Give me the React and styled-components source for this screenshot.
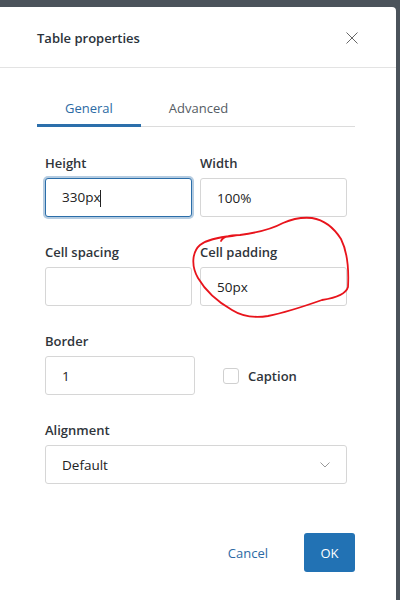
import React from "react";
import styled, { createGlobalStyle } from "styled-components";

const Global = createGlobalStyle`
  html, body { margin: 0; padding: 0; background: #4b535b; }
  body { font-family: "Open Sans", "Noto Sans", sans-serif; color: #222f3e; }
  * { box-sizing: border-box; }
`;

const Dialog = styled.div`
  position: relative;
  margin-top: 7px;
  width: 396px;
  height: 593px;
  background: #fff;
  border-top-right-radius: 4px;
  display: flex;
  flex-direction: column;
`;

const Header = styled.div`
  height: 61px;
  padding: 0 38px 0 37px;
  display: flex;
  align-items: center;
  justify-content: space-between;
  border-bottom: 1px solid #e3e3e3;
`;

const Title = styled.div`
  font-size: 13px;
  font-weight: 600;
  color: #2a323a;
  padding-top: 2px;
`;

const Close = styled.button`
  border: 0;
  background: none;
  padding: 0;
  width: 12px;
  height: 12px;
  display: flex;
  margin-top: 1px;
`;

const Body = styled.div`
  padding: 20px 41px 0 37px;
  display: flex;
  flex-direction: column;
`;

const Tabs = styled.div`
  display: flex;
  height: 39px;
  border-bottom: 1px solid #dcdcdc;
`;

const Tab = styled.div`
  padding: 0 28px;
  height: 39px;
  display: flex;
  align-items: center;
  font-size: 13px;
  color: ${(p) => (p.$active ? "#2c6aa4" : "#555c64")};
  border-bottom: 3px solid ${(p) => (p.$active ? "#2c6fab" : "transparent")};
  margin-bottom: -1px;
  padding-top: 4px;
`;

const Panel = styled.div`
  padding: 27px 8px 0 8px;
  display: flex;
  flex-direction: column;
  gap: 26px;
`;

const Grid = styled.div`
  display: grid;
  grid-template-columns: 1fr 1fr;
  column-gap: 8px;
  row-gap: 26px;
`;

const Field = styled.div`
  display: flex;
  flex-direction: column;
  width: ${(p) => p.$w || "auto"};
`;

const Label = styled.label`
  font-size: 13px;
  font-weight: 600;
  line-height: 18px;
  color: #2f353b;
  margin-bottom: 6px;
`;

const Input = styled.div`
  height: 39px;
  border: 1px solid ${(p) => (p.$focus ? "#2b6ea9" : "#d6d6d6")};
  border-radius: 3px;
  box-shadow: ${(p) => (p.$focus ? "0 0 0 2px rgba(43,110,169,0.35)" : "none")};
  padding: 0 16px;
  display: flex;
  align-items: center;
  font-size: 13.5px;
  color: #222;
  background: #fff;
  justify-content: space-between;
`;

const Caret = styled.span`
  display: inline-block;
  width: 1px;
  height: 17px;
  background: #222;
  vertical-align: middle;
`;

const Row = styled.div`
  display: flex;
  align-items: flex-end;
`;

const CheckWrap = styled.div`
  height: 39px;
  display: flex;
  align-items: center;
  margin-left: 28px;
  gap: 9px;
  font-size: 13px;
  font-weight: 600;
  color: #2f353b;
`;

const Box = styled.span`
  width: 16px;
  height: 16px;
  border: 1px solid #d0d0d0;
  border-radius: 3px;
  display: inline-block;
`;

const Footer = styled.div`
  margin-top: auto;
  padding: 0 41px 28px 0;
  display: flex;
  justify-content: flex-end;
  align-items: center;
  gap: 20px;
`;

const TextButton = styled.button`
  border: 0;
  background: none;
  font-family: inherit;
  font-size: 13px;
  color: #2c6aa4;
  padding: 0 16px;
  height: 39px;
`;

const Primary = styled.button`
  border: 0;
  background: #2272b4;
  color: #fff;
  font-family: inherit;
  font-size: 13px;
  width: 51px;
  height: 39px;
  border-radius: 3px;
`;

const Annotation = styled.svg`
  position: absolute;
  left: 0;
  top: -7px;
  pointer-events: none;
`;

export default function App() {
  return (
    <>
      <Global />
      <Dialog>
        <Header>
          <Title>Table properties</Title>
          <Close aria-label="Close">
            <svg width="12" height="12" viewBox="0 0 12 12">
              <path d="M0.5 0.5L11.5 11.5M11.5 0.5L0.5 11.5" stroke="#666" strokeWidth="1" />
            </svg>
          </Close>
        </Header>
        <Body>
          <Tabs>
            <Tab $active>General</Tab>
            <Tab>Advanced</Tab>
          </Tabs>
          <Panel>
            <Grid>
              <Field>
                <Label>Height</Label>
                <Input $focus>
                  <span>
                    330px<Caret />
                  </span>
                </Input>
              </Field>
              <Field>
                <Label>Width</Label>
                <Input>100%</Input>
              </Field>
              <Field>
                <Label>Cell spacing</Label>
                <Input />
              </Field>
              <Field>
                <Label>Cell padding</Label>
                <Input>50px</Input>
              </Field>
            </Grid>
            <Row>
              <Field $w="150px">
                <Label>Border</Label>
                <Input>1</Input>
              </Field>
              <CheckWrap>
                <Box />
                Caption
              </CheckWrap>
            </Row>
            <Field>
              <Label>Alignment</Label>
              <Input>
                Default
                <svg width="10" height="6" viewBox="0 0 10 6">
                  <path d="M0.5 0.5L5 5L9.5 0.5" stroke="#999" fill="none" />
                </svg>
              </Input>
            </Field>
          </Panel>
        </Body>
        <Footer>
          <TextButton>Cancel</TextButton>
          <Primary>OK</Primary>
        </Footer>
        <Annotation width="400" height="600" viewBox="0 0 400 600">
          <path
            d="M221 241 C223 236 230 235 240 235 C255 233 270 230 283 223 C292 219 302 217 312 218 C324 220 334 228 341 239 C347 251 349 268 348 287 C346 294 335 298 322 300 C305 306 288 312 268 316 C255 318 243 317 232 310 C218 302 205 290 198 278 C191 266 192 252 200 245 C208 239 220 237 232 236 C238 235 242 235 246 234"
            stroke="#e8141c"
            strokeWidth="1.8"
            fill="none"
            strokeLinecap="round"
          />
        </Annotation>
      </Dialog>
    </>
  );
}
